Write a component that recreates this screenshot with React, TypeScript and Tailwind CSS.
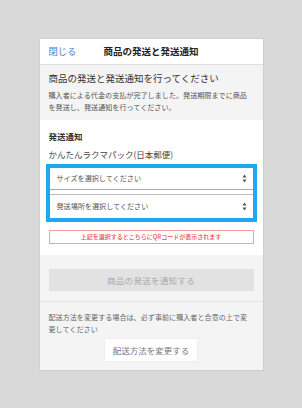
import React from 'react';

const font = { fontFamily: '"Noto Sans CJK JP", "Noto Sans", sans-serif' };

const Arrows = () => (
  <svg width="5" height="9" viewBox="0 0 5 9" className="shrink-0">
    <path d="M2.5 0.5 L4.5 3.5 L0.5 3.5 Z" fill="#555" />
    <path d="M0.5 5.5 L4.5 5.5 L2.5 8.5 Z" fill="#555" />
  </svg>
);

const SelectRow: React.FC<{ label: string; className: string }> = ({ label, className }) => (
  <div className={`flex items-center justify-between pl-[7px] pr-[6px] ${className}`}>
    <span className="text-[7.1px] leading-none text-[#555]">{label}</span>
    <Arrows />
  </div>
);

export default function App() {
  return (
    <div className="min-h-[408px] bg-[#d9d9d9] pt-[38px]" style={font}>
      <div className="mx-auto w-[225px] border border-[#cfcfcf] bg-[#f4f4f4]">
        {/* header */}
        <div className="grid h-[26px] grid-cols-[1fr_auto_1fr] items-center border-b border-[#dedede] bg-white px-[9px]">
          <span className="text-[9.3px] text-[#4a7fd6]">閉じる</span>
          <span className="text-[9.5px] font-bold text-[#222]">商品の発送と発送通知</span>
          <span />
        </div>

        {/* intro */}
        <div className="px-[9px] pt-[6px] pb-[7px]">
          <p className="text-[9.5px] leading-[14px] text-[#333]">商品の発送と発送通知を行ってください</p>
          <p className="mt-[4px] text-[7.1px] leading-[12px] text-[#555]">
            購入者による代金の支払が完了しました。発送期限までに商品を発送し、発送通知を行ってください。
          </p>
        </div>

        {/* notice form */}
        <div className="bg-white px-[9px] pt-[10px] pb-[11px]">
          <p className="text-[8.5px] font-bold leading-[12px] text-[#333]">発送通知</p>
          <p className="mt-[6px] text-[8.5px] leading-[12px] text-[#444]">かんたんラクマパック(日本郵便)</p>
          <div className="mt-[4px] -mx-[3px] border-[4px] border-[#1fa8ef] bg-white">
            <SelectRow label="サイズを選択してください" className="h-[22px] border-b border-[#aaa]" />
            <SelectRow label="発送場所を選択してください" className="mt-[4px] h-[24px] border-t border-[#bbb]" />
          </div>
          <div className="mt-[8px] flex h-[14px] items-center justify-center border border-[#f3a0a0]">
            <span className="text-[6px] font-medium leading-none text-[#ec4b4b]">
              上記を選択するとこちらにQRコードが表示されます
            </span>
          </div>
        </div>

        {/* submit */}
        <div className="border-b border-[#e2e2e2] px-[9px] pt-[14px] pb-[10px]">
          <div className="flex h-[22px] items-center justify-center bg-[#e2e2e2]">
            <span className="text-[8.5px] tracking-[0.3px] text-[#aaa]">商品の発送を通知する</span>
          </div>
        </div>

        {/* change method */}
        <div className="px-[9px] pt-[10px] pb-[9px]">
          <p className="text-[7.1px] leading-[11.5px] text-[#666]">
            配送方法を変更する場合は、必ず事前に購入者と合意の上で変更してください
          </p>
          <div className="mt-[4px] flex justify-center">
            <div className="flex h-[22px] w-[92px] items-center justify-center bg-white shadow-[0_0_1px_rgba(0,0,0,0.12)]">
              <span className="text-[8.5px] text-[#777]">配送方法を変更する</span>
            </div>
          </div>
        </div>
      </div>
    </div>
  );
}
